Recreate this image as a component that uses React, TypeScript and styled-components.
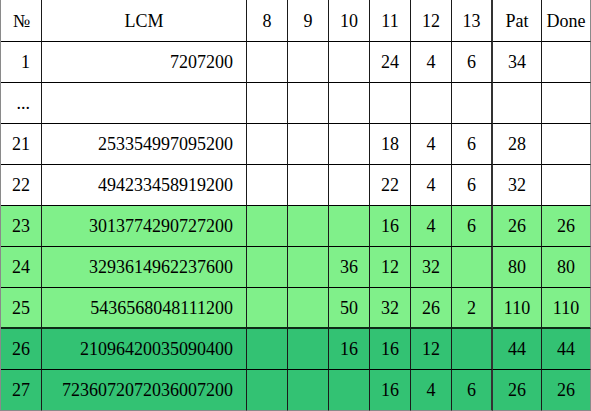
import React from "react";
import styled, { createGlobalStyle } from "styled-components";

const GlobalStyle = createGlobalStyle`
  html, body { margin: 0; padding: 0; background: #ffffff; }
  body { font-family: "Liberation Serif", "DejaVu Serif", serif; color: #000; }
`;

type Tone = "white" | "light" | "dark";

const toneBg: Record<Tone, string> = {
  white: "#ffffff",
  light: "#80f08a",
  dark: "#33c273",
};

const Grid = styled.div`
  display: grid;
  grid-template-columns: 41px 205px repeat(6, 41px) 49px 49px;
  grid-auto-rows: 41px;
  grid-template-rows: 42px;
  width: 590px;
  border-left: 1px solid #8a8a8a;
  font-size: 18px;
  line-height: 1;
`;

const Cell = styled.div<{
  $tone: Tone;
  $align?: "left" | "center" | "right";
  $thickRight?: boolean;
  $lastCol?: boolean;
  $lastRow?: boolean;
  $thickBottom?: boolean;
}>`
  box-sizing: border-box;
  display: flex;
  align-items: center;
  justify-content: ${(p) =>
    p.$align === "right" ? "flex-end" : p.$align === "left" ? "flex-start" : "center"};
  padding: ${(p) => (p.$align === "right" ? "0 12px 0 0" : "0")};
  background: ${(p) => toneBg[p.$tone]};
  border-right: ${(p) =>
    p.$lastCol ? "1px solid #8a8a8a" : p.$thickRight ? "2px solid #333" : "1px solid #1a1a1a"};
  border-bottom: ${(p) =>
    p.$lastRow ? "1px solid #8a8a8a" : p.$thickBottom ? "2px solid #0d2a16" : "1px solid #000"};
  white-space: nowrap;
`;

const NumCell = styled(Cell)`
  padding-right: 11px;
`;

const LcmCell = styled(Cell)`
  padding-right: 13px;
`;

type Row = {
  n: string;
  lcm: string;
  vals: string[]; // 8..13
  pat: string;
  done: string;
  tone: Tone;
};

const rows: Row[] = [
  { n: "1", lcm: "7207200", vals: ["", "", "", "24", "4", "6"], pat: "34", done: "", tone: "white" },
  { n: "...", lcm: "", vals: ["", "", "", "", "", ""], pat: "", done: "", tone: "white" },
  { n: "21", lcm: "253354997095200", vals: ["", "", "", "18", "4", "6"], pat: "28", done: "", tone: "white" },
  { n: "22", lcm: "494233458919200", vals: ["", "", "", "22", "4", "6"], pat: "32", done: "", tone: "white" },
  { n: "23", lcm: "3013774290727200", vals: ["", "", "", "16", "4", "6"], pat: "26", done: "26", tone: "light" },
  { n: "24", lcm: "3293614962237600", vals: ["", "", "36", "12", "32", ""], pat: "80", done: "80", tone: "light" },
  { n: "25", lcm: "5436568048111200", vals: ["", "", "50", "32", "26", "2"], pat: "110", done: "110", tone: "light" },
  { n: "26", lcm: "21096420035090400", vals: ["", "", "16", "16", "12", ""], pat: "44", done: "44", tone: "dark" },
  { n: "27", lcm: "7236072072036007200", vals: ["", "", "", "16", "4", "6"], pat: "26", done: "26", tone: "dark" },
];

const headers = ["8", "9", "10", "11", "12", "13"];

export default function App() {
  return (
    <>
      <GlobalStyle />
      <Grid>
        <NumCell $tone="white" $align="right">№</NumCell>
        <Cell $tone="white">LCM</Cell>
        {headers.map((h, i) => (
          <Cell key={h} $tone="white" $thickRight={i === 5}>
            {h}
          </Cell>
        ))}
        <Cell $tone="white">Pat</Cell>
        <Cell $tone="white" $lastCol>
          Done
        </Cell>
        {rows.map((r, ri) => {
          const lastRow = ri === rows.length - 1;
          const thickBottom = ri === 6;
          const common = { $tone: r.tone, $lastRow: lastRow, $thickBottom: thickBottom };
          return (
            <React.Fragment key={ri}>
              <NumCell {...common} $align="right">
                {r.n}
              </NumCell>
              <LcmCell {...common} $align="right">
                {r.lcm}
              </LcmCell>
              {r.vals.map((v, i) => (
                <Cell key={i} {...common} $thickRight={i === 5}>
                  {v}
                </Cell>
              ))}
              <Cell {...common}>{r.pat}</Cell>
              <Cell {...common} $lastCol>
                {r.done}
              </Cell>
            </React.Fragment>
          );
        })}
      </Grid>
    </>
  );
}
